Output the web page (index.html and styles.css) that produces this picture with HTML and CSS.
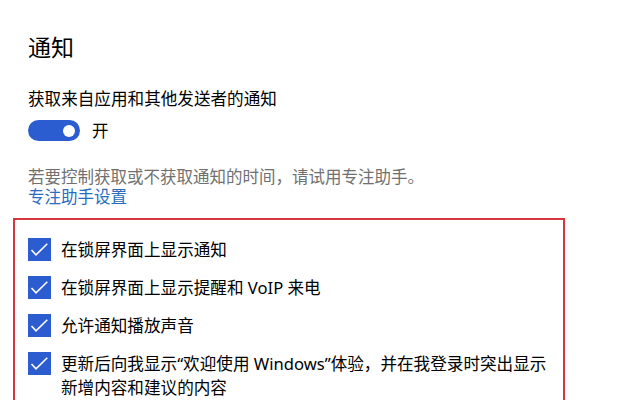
FILE: index.html
```html
<!DOCTYPE html>
<html lang="zh-CN">
<head>
<meta charset="utf-8">
<link rel="stylesheet" href="styles.css">
</head>
<body>
<div class="page">
  <h1 class="title">通知</h1>
  <div class="label">获取来自应用和其他发送者的通知</div>
  <div class="toggle-row">
    <span class="toggle"><span class="thumb"></span></span>
    <span class="toggle-text">开</span>
  </div>
  <p class="hint">若要控制获取或不获取通知的时间，请试用专注助手。</p>
  <a class="link">专注助手设置</a>
  <div class="box">
    <div class="row">
      <span class="check"><svg viewBox="0 0 23 23" width="23" height="23"><path d="M3.5 12 L8 16.8 L19.3 5.8" fill="none" stroke="#fff" stroke-width="1.6"/></svg></span>
      <span class="row-text">在锁屏界面上显示通知</span>
    </div>
    <div class="row">
      <span class="check"><svg viewBox="0 0 23 23" width="23" height="23"><path d="M3.5 12 L8 16.8 L19.3 5.8" fill="none" stroke="#fff" stroke-width="1.6"/></svg></span>
      <span class="row-text">在锁屏界面上显示提醒和 VoIP 来电</span>
    </div>
    <div class="row">
      <span class="check"><svg viewBox="0 0 23 23" width="23" height="23"><path d="M3.5 12 L8 16.8 L19.3 5.8" fill="none" stroke="#fff" stroke-width="1.6"/></svg></span>
      <span class="row-text">允许通知播放声音</span>
    </div>
    <div class="row">
      <span class="check"><svg viewBox="0 0 23 23" width="23" height="23"><path d="M3.5 12 L8 16.8 L19.3 5.8" fill="none" stroke="#fff" stroke-width="1.6"/></svg></span>
      <span class="row-text">更新后向我显示“欢迎使用 Windows”体验，并在我登录时突出显示<br>新增内容和建议的内容</span>
    </div>
  </div>
</div>
</body>
</html>
```
FILE: styles.css
```css
html, body {
  margin: 0;
  padding: 0;
  background: #ffffff;
}
body {
  font-family: "Noto Sans", "Noto Sans CJK SC", sans-serif;
  color: #000000;
}
.page {
  padding: 31px 0 0 0;
  overflow: hidden;
  height: 400px;
  box-sizing: border-box;
}
.title {
  margin: 0 0 0 28px;
  font-size: 23px;
  font-weight: 400;
  line-height: 32px;
}
.label {
  margin: 23.5px 0 0 28px;
  font-size: 16.6px;
  line-height: 24px;
}
.toggle-row {
  display: flex;
  align-items: center;
  margin: 9.5px 0 0 28px;
  height: 21px;
}
.toggle {
  position: relative;
  width: 52px;
  height: 21px;
  border-radius: 11px;
  background: #2b5cd0;
  display: block;
}
.thumb {
  position: absolute;
  right: 5px;
  top: 4.5px;
  width: 12px;
  height: 12px;
  border-radius: 50%;
  background: #ffffff;
}
.toggle-text {
  margin-left: 12px;
  font-size: 16.5px;
  line-height: 21px;
}
.hint {
  margin: 25.5px 0 0 28px;
  font-size: 16.5px;
  line-height: 20px;
  color: #707070;
}
.link {
  display: block;
  margin-left: 28px;
  font-size: 16.5px;
  line-height: 20px;
  color: #2a6cc0;
}
.box {
  margin: 11px 0 0 12.5px;
  width: 552px;
  box-sizing: border-box;
  border: 2px solid #d6363f;
  border-bottom: none;
  padding: 18px 0 40px 13.5px;
  display: flex;
  flex-direction: column;
  gap: 14px;
}
.row {
  display: flex;
  align-items: flex-start;
}
.check {
  flex: none;
  width: 23px;
  height: 23px;
  margin-top: 0.5px;
  background: #2b5cd0;
  display: block;
}
.check svg {
  display: block;
}
.row-text {
  margin-left: 10px;
  font-size: 16.6px;
  line-height: 24px;
  color: #000000;
}
```
